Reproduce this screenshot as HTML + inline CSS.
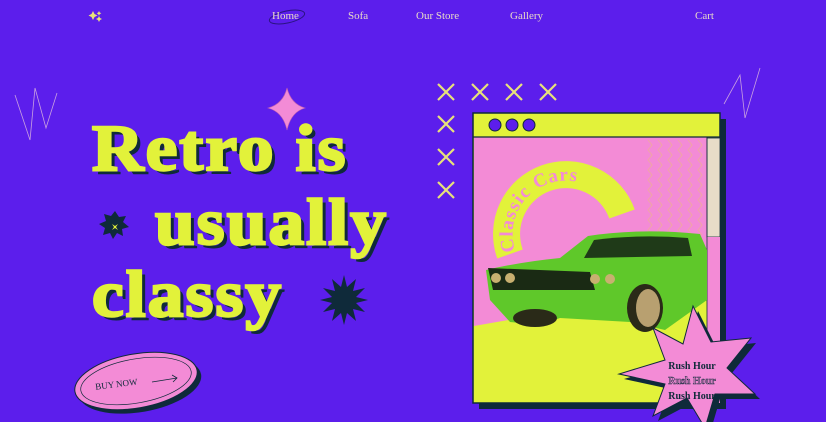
<!DOCTYPE html>
<html><head><style>
*{margin:0;padding:0;box-sizing:border-box}
body{width:826px;height:422px;overflow:hidden;background:#5c1eec;position:relative;font-family:"Liberation Serif",serif}
.nav{position:absolute;top:10px;font-size:11px;color:#e8d9c8}
.h{position:absolute;font-family:"Liberation Serif",serif;font-weight:bold;color:#e2f23a;font-size:66px;letter-spacing:2px;-webkit-text-stroke:2.5px #e2f23a;text-shadow:4px 4px 0 #0f2a3a;line-height:1;transform-origin:0 0;transform:scaleX(1.08)}
</style></head><body>
<svg width="826" height="422" style="position:absolute;left:0;top:0">
 <g fill="#e8e27a"><path d="M93 11l1.5 3 3 1.5-3 1.5-1.5 3-1.5-3-3-1.5 3-1.5z"/><path d="M99 16l1 2 2 1-2 1-1 2-1-2-2-1 2-1z"/><path d="M99 11l.8 1.5 1.5.8-1.5.8-.8 1.5-.8-1.5-1.5-.8 1.5-.8z"/></g>
 <ellipse cx="287" cy="17" rx="18" ry="6" transform="rotate(-12 287 17)" fill="none" stroke="#2a1480" stroke-width="1"/>
 <polyline points="15,95 30,140 35,88 46,128 57,93" fill="none" stroke="#c9a0e0" stroke-width="0.8"/>
 <polyline points="724,104 740,75 745,118 760,68" fill="none" stroke="#c9a0e0" stroke-width="0.8"/>
 <path d="M287 88 Q291 104 305 108 Q291 112 287 130 Q283 112 268 108 Q283 104 287 88Z" fill="#f38bd6" stroke="#c060b0" stroke-width="0.6"/>
 <g stroke="#e8e27a" stroke-width="2.2"><g id="x"><path d="M438 84l16 16M454 84l-16 16"/></g>
 <use href="#x" x="34"/><use href="#x" x="68"/><use href="#x" x="102"/><use href="#x" y="32"/><use href="#x" y="65"/><use href="#x" y="98"/></g>
 <rect x="479" y="119" width="247" height="290" fill="#0f2a3a"/>
 <rect x="473" y="113" width="247" height="290" fill="#e2f23a" stroke="#0f2a3a" stroke-width="1.5"/>
 <rect x="474" y="137" width="233" height="190" fill="#f38bd6"/>
 <path d="M474 326 L707 285 L707 402 L474 402Z" fill="#e2f23a"/>
 <line x1="473" y1="137" x2="720" y2="137" stroke="#0f2a3a" stroke-width="1.2"/>
 <rect x="707" y="138" width="13" height="99" fill="#e8dcc8" stroke="#0f2a3a" stroke-width="0.8"/>
 <rect x="707" y="237" width="13" height="166" fill="#f38bd6"/>
 <line x1="707" y1="137" x2="707" y2="403" stroke="#0f2a3a" stroke-width="0.8"/>
 <g fill="#5c1eec" stroke="#0f2a3a" stroke-width="1"><circle cx="495" cy="125" r="6"/><circle cx="512" cy="125" r="6"/><circle cx="529" cy="125" r="6"/></g>
 <g fill="none" stroke="#f0a8a0" stroke-width="0.9">
  <path id="z" d="M648 140 l4 5 -4 5 4 5 -4 5 4 5 -4 5 4 5 -4 5 4 5 -4 5 4 5 -4 5 4 5 -4 5 4 5 -4 5 4 5 -4 5 4 5"/>
  <use href="#z" x="10"/><use href="#z" x="20"/><use href="#z" x="30"/><use href="#z" x="40"/><use href="#z" x="50"/>
 </g>
 <path id="arc" d="M510 254 A58 58 0 0 1 622 214" fill="none" stroke="#e2f23a" stroke-width="27"/>
 <text font-family="Liberation Serif" font-weight="bold" font-size="19" fill="#f38bd6" letter-spacing="2" dy="6"><textPath href="#arc" startOffset="2">Classic Cars</textPath></text>
 <path d="M486 270 Q520 262 560 258 L588 236 Q640 228 700 234 L707 250 L707 300 L665 330 L630 322 L560 318 L540 325 L510 322 L490 300Z" fill="#5fc82a"/>
 <path d="M594 240 Q640 234 688 238 L692 256 L584 258Z" fill="#1f3a18"/>
 <path d="M488 268 L590 272 L595 290 L493 290Z" fill="#1a2a14"/>
 <g fill="#c8b070"><circle cx="496" cy="278" r="5"/><circle cx="510" cy="278" r="5"/><circle cx="595" cy="279" r="5"/><circle cx="610" cy="279" r="5"/></g>
 <ellipse cx="645" cy="308" rx="18" ry="24" fill="#2a2a18"/><ellipse cx="648" cy="308" rx="12" ry="19" fill="#b8a070"/>
 <ellipse cx="535" cy="318" rx="22" ry="9" fill="#2a2a18"/>
 <g transform="translate(693,368)">
  <path d="M0-62 L18-26 L58-30 L34 0 L62 26 L22 26 L12 60 L-6 30 L-40 48 L-28 16 L-74 6 L-28-8 L-40-40 L-10-24Z" fill="#0f2a3a" transform="translate(5,5)"/>
  <path d="M0-62 L18-26 L58-30 L34 0 L62 26 L22 26 L12 60 L-6 30 L-40 48 L-28 16 L-74 6 L-28-8 L-40-40 L-10-24Z" fill="#f38bd6" stroke="#0f2a3a" stroke-width="1"/>
 </g>
 <path d="M115 203 l4 6 7-1-3 6 6 5-7 2 1 7-6-3-4 6-3-6-7 2 2-7-6-4 7-3-2-7 7 2z" fill="#0f2a3a" transform="translate(0,8)"/>
 <path d="M112 224 l3 2 3-2-2 3 2 3-3-2-3 2 2-3z" fill="#e2f23a"/>
 <path d="M344 275 l3 12 9-8-3 12 12-3-9 9 12 3-12 3 9 9-12-3 3 12-9-8-3 12-3-12-9 8 3-12-12 3 9-9-12-3 12-3-9-9 12 3-3-12 9 8z" fill="#0f2a3a"/>
 <ellipse cx="140" cy="385" rx="62" ry="27" transform="rotate(-10 140 385)" fill="#0f2a3a"/>
 <ellipse cx="136" cy="381" rx="62" ry="27" transform="rotate(-10 136 381)" fill="#f38bd6" stroke="#0f2a3a" stroke-width="1"/>
 <ellipse cx="136" cy="381" rx="56" ry="22" transform="rotate(-10 136 381)" fill="none" stroke="#0f2a3a" stroke-width="0.7"/>
 <path d="M152 382 L177 378 M172 375 L177 378 L173 382" stroke="#0f2a3a" stroke-width="0.8" fill="none"/>
 <text x="95" y="387" font-family="Liberation Serif" font-size="9" fill="#0f2a3a" transform="rotate(-7 118 383)">BUY NOW</text>
 <g font-family="Liberation Serif" font-weight="bold" font-size="10" fill="#0f2a3a" text-anchor="middle">
  <text x="692" y="369">Rush Hour</text><text x="692" y="384" fill="#f38bd6" stroke="#0f2a3a" stroke-width="0.5">Rush Hour</text><text x="692" y="399">Rush Hour</text>
 </g>
</svg>
<div class="nav" style="left:272px;color:#e8d9c8">Home</div>
<div class="nav" style="left:348px">Sofa</div>
<div class="nav" style="left:416px">Our Store</div>
<div class="nav" style="left:510px">Gallery</div>
<div class="nav" style="left:695px">Cart</div>
<div class="h" style="left:92px;top:116px">Retro is</div>
<div class="h" style="left:155px;top:190px">usually</div>
<div class="h" style="left:92px;top:262px">classy</div>
</body></html>
